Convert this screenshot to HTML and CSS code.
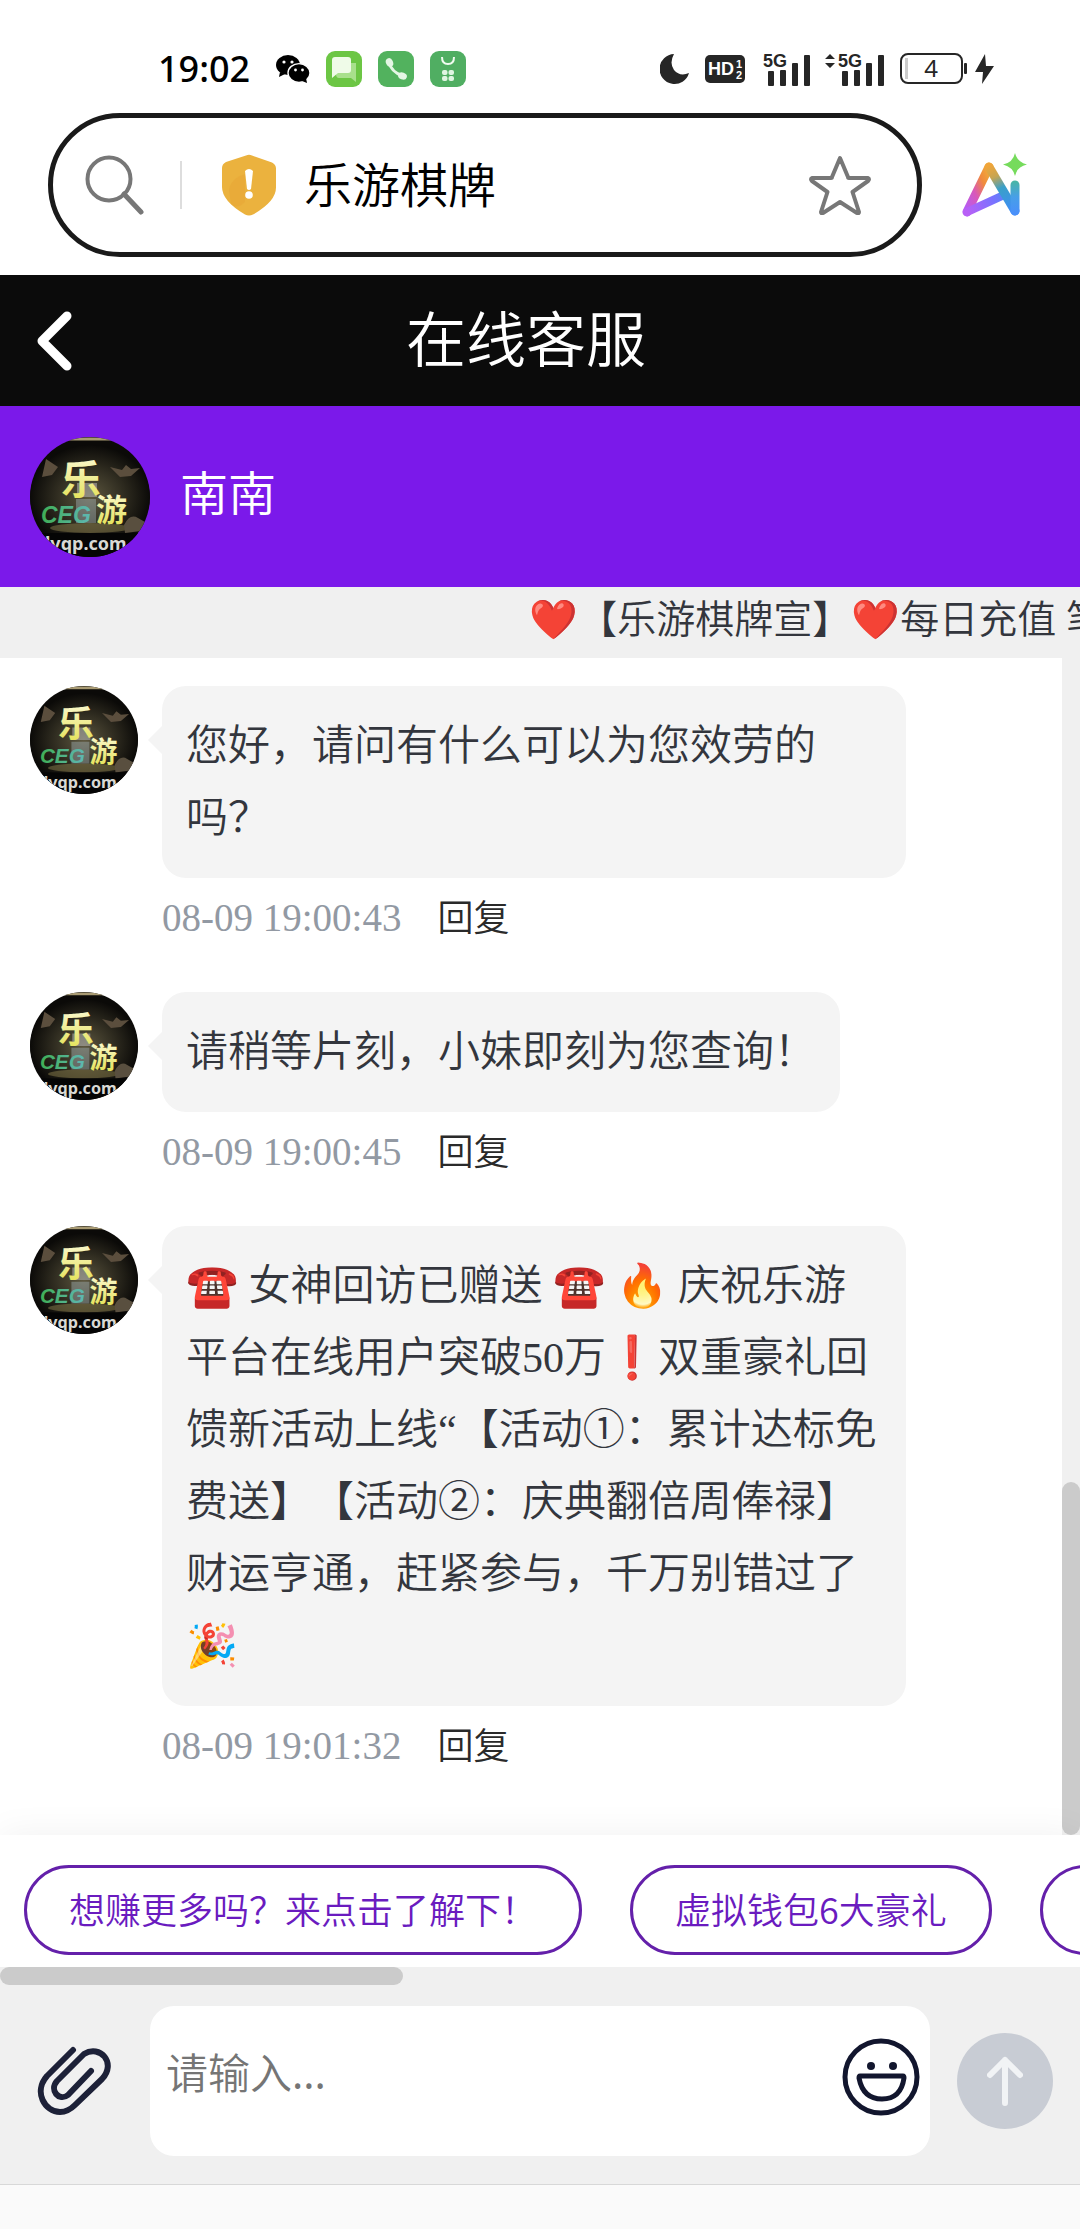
FILE: index.html
```html
<!DOCTYPE html>
<html lang="zh-CN">
<head>
<meta charset="utf-8">
<meta name="viewport" content="width=device-width, initial-scale=1">
<title>在线客服</title>
<link rel="stylesheet" href="styles.css">
</head>
<body>
<svg class="defs" aria-hidden="true">
  <defs>
    <radialGradient id="avGlow" cx=".5" cy=".5" r=".5"><stop offset="0" stop-color="#5d573f"/><stop offset=".6" stop-color="#2c291e"/><stop offset="1" stop-color="#0b0a08"/></radialGradient>
    <linearGradient id="avGold" x1="0" y1="0" x2="0" y2="1"><stop offset="0" stop-color="#fffde6"/><stop offset="1" stop-color="#e2df4a"/></linearGradient>
    <linearGradient id="avTeal" x1="0" y1="0" x2="1" y2="0"><stop offset="0" stop-color="#3fae55"/><stop offset="1" stop-color="#5fb7b4"/></linearGradient>
    <symbol id="avatar" viewBox="0 0 120 120">
      <rect width="120" height="120" fill="#0b0a08"/>
      <ellipse cx="60" cy="60" rx="60" ry="52" fill="url(#avGlow)"/>
      <path d="M34 2h52" stroke="#a89a72" stroke-width="3"/>
      <path d="M16 22l12 8-6 8-10 2zM80 30l12 3 4-5 5 4 9-1-9 8-11 1z" fill="#5b4e3d"/>
      <ellipse cx="60" cy="91" rx="40" ry="5" fill="#8a7d4c" opacity=".5"/>
      <path d="M94 88q6-12 14-7l7 4-4 9-16 2z" fill="#594f3f"/>
      <path d="M47 46h20v14h-20z" fill="#c9cdd0" opacity=".45"/>
      <text x="31" y="57" class="av-big" fill="url(#avGold)">乐</text>
      <path d="M46 62h20v24h-20z" fill="#a9bcc4" opacity=".4"/>
      <text x="11" y="86" class="av-tag" fill="url(#avTeal)">CEG</text>
      <text x="66" y="84" class="av-mid" fill="url(#avGold)">游</text>
      <rect y="96" width="120" height="24" fill="#050505"/>
      <text x="15" y="113" class="av-url" fill="#d9d9d4">lyqp.com</text>
    </symbol>
    <linearGradient id="aiA" x1="0" y1="1" x2="1" y2="0"><stop offset="0" stop-color="#b45cf5"/><stop offset=".4" stop-color="#d958b8"/><stop offset=".7" stop-color="#f08a3c"/><stop offset="1" stop-color="#f0b03a"/></linearGradient>
    <linearGradient id="aiB" gradientUnits="userSpaceOnUse" x1="5" y1="58" x2="48" y2="40"><stop offset="0" stop-color="#b860f6"/><stop offset=".6" stop-color="#7a72ff"/><stop offset="1" stop-color="#4a8cf5"/></linearGradient>
    <linearGradient id="aiC" gradientUnits="userSpaceOnUse" x1="28" y1="12" x2="50" y2="58"><stop offset="0" stop-color="#f0a53a"/><stop offset=".25" stop-color="#c6a552"/><stop offset=".5" stop-color="#3aa0c8"/><stop offset="1" stop-color="#3f8df7"/></linearGradient>
    <linearGradient id="aiD" gradientUnits="userSpaceOnUse" x1="53" y1="28" x2="54" y2="60"><stop offset="0" stop-color="#47b6a4"/><stop offset=".5" stop-color="#479fe8"/><stop offset="1" stop-color="#4a90fa"/></linearGradient>
  </defs>
</svg>

<div class="status">
  <span class="clock">19:02</span>
  <div class="notices">
    <svg width="34" height="28" viewBox="0 0 34 28"><ellipse cx="12" cy="10" rx="12" ry="10" fill="#000"/><path d="M4 17l-1 5 6-3z"/><circle cx="8" cy="7" r="1.6" fill="#fff"/><circle cx="16" cy="7" r="1.6" fill="#fff"/><ellipse cx="23" cy="18" rx="11" ry="9.4" fill="#000" stroke="#fff" stroke-width="1.4"/><path d="M26 26l5 2-1-5z"/><circle cx="19.500" cy="15" r="1.400" fill="#fff"/><circle cx="26.500" cy="15" r="1.400" fill="#fff"/></svg>
    <svg width="36" height="36" viewBox="0 0 36 36"><rect width="36" height="36" rx="9" fill="#6cc644"/><path d="M24 12h6v19l-5-4h-12q-3 0-3-4z" fill="#a8e08c"/><path d="M9 6h13q3 0 3 3v10q0 3-3 3h-10l-6 5v-18q0-3 3-3z" fill="#effbe8"/></svg>
    <svg width="36" height="36" viewBox="0 0 36 36"><rect width="36" height="36" rx="9" fill="#52b25e"/><path d="M11 11q2 10 14 14" fill="none" stroke="#e4f6e4" stroke-width="3"/><ellipse cx="11.500" cy="11.500" rx="3.500" ry="4.500" fill="#e4f6e4" transform="rotate(-25 11.500 11.500)"/><ellipse cx="24.500" cy="25" rx="4.500" ry="3.500" fill="#e4f6e4" transform="rotate(20 24.500 25)"/></svg>
    <svg width="36" height="36" viewBox="0 0 36 36"><rect width="36" height="36" rx="9" fill="#50ae62"/><path d="M12 6q0 7 6 7t6-7" fill="none" stroke="#f0fbf0" stroke-width="2"/><g fill="#dff5e2"><rect x="12" y="19" width="5.500" height="5" rx="2"/><rect x="18.500" y="19" width="5.500" height="5" rx="2"/><rect x="12" y="25" width="5.500" height="5" rx="2"/><rect x="18.500" y="25" width="5.500" height="5" rx="2"/></g></svg>
  </div>
  <div class="signals">
    <svg width="30" height="32" viewBox="0 0 30 32"><path d="M14 1A15 15 0 1 0 29 20Q20 24 14 17Q9 10 14 1z" fill="#262626"/></svg>
    <svg width="40" height="30" viewBox="0 0 40 30"><rect y="1" width="40" height="28" rx="5" fill="#262626"/><text x="3" y="21" class="hd">HD</text><text x="31" y="14" class="hd-n">1</text><text x="31" y="25" class="hd-n">2</text></svg>
    <svg width="50" height="34" viewBox="-4 0 50 34"><text x="-1" y="15" class="net">5G</text><g fill="#262626"><rect x="4" y="19" width="6" height="15" rx="1"/><rect x="16" y="18" width="6" height="16" rx="1"/><rect x="28" y="11" width="6" height="23" rx="1"/><rect x="40" y="3" width="6" height="31" rx="1"/></g></svg>
    <svg width="60" height="34" viewBox="0 0 60 34"><path d="M0 7l5-5 5 5zM0 11h10l-5 5z" fill="#262626"/><text x="13" y="15" class="net">5G</text><g fill="#262626"><rect x="17" y="19" width="6" height="15" rx="1"/><rect x="29" y="18" width="6" height="16" rx="1"/><rect x="41" y="11" width="6" height="23" rx="1"/><rect x="53" y="3" width="6" height="31" rx="1"/></g></svg>
    <svg width="94" height="32" viewBox="0 0 94 32"><rect x="1" y="1" width="61" height="29" rx="7" fill="#fff" stroke="#262626" stroke-width="2"/><rect x="5" y="5" width="3" height="21" fill="#ccc"/><text x="31" y="24" class="batt">4</text><rect x="64" y="10" width="3" height="11" rx="1" fill="#262626"/><path d="M85 1L75 19h8l-1 12 12-18h-8z" fill="#262626"/></svg>
  </div>
</div>

<div class="browser">
  <div class="address">
    <svg class="mag" width="60" height="60" viewBox="0 0 60 60" fill="none" stroke="#777" stroke-width="4" stroke-linecap="round"><circle cx="24" cy="24" r="21.500"/><path d="M39 39l17 18" stroke-width="5"/></svg>
    <span class="rule"></span>
    <svg width="54" height="62" viewBox="0 0 54 62"><path d="M24 1.500q3-1.500 6 0l20 7q4 2 4 6v19q0 14-23 27-4 2-8 0Q0 47 0 33V14q0-4 4-6z" fill="#ebb23e"/><path d="M7 36q2-12 16-16v28q-8 8-14 2z" fill="#e7a637" opacity=".6"/><path d="M23 17q4-4 8 0l-2 18q-2 2-4 0z" fill="#fff"/><circle cx="27" cy="41" r="3.800" fill="#fff"/></svg>
    <span class="site">乐游棋牌</span>
    <button class="icon-btn" aria-label="收藏"><svg width="62" height="60" viewBox="0 0 62 60"><path d="M31 3l8 19q0 1 1 1l19 0q2 1 0 3L43.500 37l6.500 20q0 2-2 1L31 47 14 58q-2 1-2-1l6.500-20L3 26q-2-2 0-3h19q1 0 1-1z" fill="none" stroke="#777" stroke-width="4" stroke-linejoin="round"/></svg></button>
  </div>
  <button class="icon-btn" aria-label="AI 助手"><svg width="66" height="64" viewBox="0 0 66 64" fill="none" stroke-width="9" stroke-linecap="round" stroke-linejoin="round"><path d="M27 14L5 59" stroke="url(#aiA)"/><path d="M5 59L42 42" stroke="url(#aiB)" stroke-width="8"/><path d="M27 14L53 58" stroke="url(#aiC)"/><path d="M53 58L53 32" stroke="url(#aiD)"/><path d="M53 0q2 9 12 11.500-10 2-12 11.500-2-9-12-11.500 10-2 12-11.500z" fill="#76db5c"/></svg></button>
</div>

<header class="title-bar">
  <button class="icon-btn back" aria-label="返回"><svg width="36" height="60" viewBox="0 0 36 60"><path d="M31 5L6 30l25 25" fill="none" stroke="#fff" stroke-width="9" stroke-linecap="round" stroke-linejoin="round"/></svg></button>
  <h1>在线客服</h1>
</header>

<section class="agent">
  <svg class="agent-avatar" role="img" aria-label="南南"><use href="#avatar"/></svg>
  <span class="agent-name">南南</span>
</section>

<div class="notice"><p>❤️【乐游棋牌宣】❤️每日充值 笔笔赠送</p></div>

<main class="chat">
  <div class="messages">
    <article class="msg">
      <svg class="avatar" aria-hidden="true"><use href="#avatar"/></svg>
      <div class="body">
        <p class="bubble">您好，请问有什么可以为您效劳的吗？</p>
        <div class="meta"><time>08-09 19:00:43</time><button class="reply">回复</button></div>
      </div>
    </article>
    <article class="msg">
      <svg class="avatar" aria-hidden="true"><use href="#avatar"/></svg>
      <div class="body">
        <p class="bubble">请稍等片刻，小妹即刻为您查询！</p>
        <div class="meta"><time>08-09 19:00:45</time><button class="reply">回复</button></div>
      </div>
    </article>
    <article class="msg">
      <svg class="avatar" aria-hidden="true"><use href="#avatar"/></svg>
      <div class="body">
        <p class="bubble">☎️ 女神回访已赠送 ☎️ 🔥 庆祝乐游平台在线用户突破50万❗双重豪礼回馈新活动上线“【活动①：累计达标免费送】【活动②：庆典翻倍周俸禄】财运亨通，赶紧参与，千万别错过了🎉</p>
        <div class="meta"><time>08-09 19:01:32</time><button class="reply">回复</button></div>
      </div>
    </article>
  </div>
  <div class="v-rail"><div class="v-thumb"></div></div>
</main>

<nav class="quick" aria-label="快捷问题">
  <button class="chip">想赚更多吗？来点击了解下！</button>
  <button class="chip">虚拟钱包6大豪礼</button>
  <button class="chip chip-next" aria-label="更多活动"></button>
</nav>
<div class="h-rail"><div class="h-thumb" style="width: 37.3%"></div></div>

<form class="composer">
  <button type="button" class="icon-btn clip" aria-label="附件"><svg width="76" height="70" viewBox="0 0 76 70" fill="none" stroke="#1d2138" stroke-width="6" stroke-linecap="round" stroke-linejoin="round"><path d="M36 4L10 30C-4 46 8 66 23 66C30 66 34 63 38 59L65 33C80 17 63-2 47 8L20 35C12 44 22 56 31 49L54 25"/></svg></button>
  <div class="field">
    <input id="msg" type="text" placeholder="请输入..." aria-label="请输入">
    <button type="button" class="icon-btn" aria-label="表情"><svg width="78" height="78" viewBox="0 0 78 78" fill="none" stroke="#12162e" stroke-width="5"><circle cx="39" cy="39" r="36"/><circle cx="29" cy="28" r="4" fill="#12162e" stroke="none"/><circle cx="51" cy="28" r="4" fill="#12162e" stroke="none"/><path d="M18 38h43q1 0 1 2Q59 61 40 61T17 40q0-2 1-2z" stroke-linejoin="round"/></svg></button>
  </div>
  <button type="submit" class="send" aria-label="发送"><svg width="36" height="50" viewBox="0 0 36 50" fill="none" stroke="#f1f3f5" stroke-width="6" stroke-linecap="round" stroke-linejoin="round"><path d="M18 47V4M3 19L18 4l15 15"/></svg></button>
</form>
<footer class="home-bar"></footer>
</body>
</html>
```
FILE: styles.css
```css
* { box-sizing: border-box; }

body {
  margin: 0;
  min-height: 100vh;
  display: flex;
  flex-direction: column;
  background: #fff;
  color: #33363d;
  font-family: "Noto Sans", "Noto Sans CJK SC DemiLight", "Noto Sans CJK SC", sans-serif;
  text-spacing-trim: space-all;
  overflow-x: hidden;
}

h1, p { margin: 0; font-weight: inherit; }
svg { display: block; flex: none; }
.defs { position: absolute; width: 0; height: 0; }

button {
  font: inherit;
  color: inherit;
  background: none;
  border: 0;
  padding: 0;
  flex: none;
}

/* device status bar */
.status {
  height: 113px;
  padding: 25px 86px 0 158px;
  display: flex;
  align-items: center;
}
.clock { font: 500 36px/44px "Noto Sans", sans-serif; color: #000; }
.notices { display: flex; align-items: center; gap: 16px; margin-left: 26px; }
.signals { display: flex; align-items: center; gap: 15px; margin-left: auto; }
.hd { font: 700 18px "Liberation Sans", sans-serif; fill: #fff; }
.hd-n { font: 700 11px "Liberation Sans", sans-serif; fill: #fff; }
.net { font: 700 18px "Liberation Sans", sans-serif; fill: #262626; }
.batt { font: 400 24px "Noto Sans", sans-serif; fill: #262626; text-anchor: middle; }

/* address bar */
.browser {
  display: flex;
  align-items: center;
  gap: 40px;
  padding: 0 52px 18px 48px;
}
.address {
  flex: 1;
  display: flex;
  align-items: center;
  height: 144px;
  padding: 0 46px 0 32px;
  border: 5px solid #1a1a1a;
  border-radius: 72px;
}
.rule { width: 2px; height: 48px; margin: 0 40px 0 35px; background: #ddd; }
.site { flex: 1; margin-left: 28px; font-size: 48px; line-height: 64px; color: #000; }

/* page title */
.title-bar {
  display: flex;
  align-items: center;
  height: 131px;
  padding: 0 100px 4px 0;
  background: #0b0b0b;
  color: #fff;
}
.back { width: 72px; padding: 4px 0 0 36px; }
.title-bar h1 { flex: 1; text-align: center; font-size: 60px; line-height: 84px; }

.agent {
  display: flex;
  align-items: center;
  gap: 30px;
  height: 181px;
  padding: 0 30px;
  background: #7b19ea;
  color: #fff;
}
.agent-avatar { width: 120px; height: 120px; border-radius: 50%; }
.agent-name { padding-bottom: 8px; font-size: 48px; line-height: 64px; }

.av-big { font: 700 40px "Noto Sans CJK SC", sans-serif; }
.av-mid { font: 700 31px "Noto Sans CJK SC", sans-serif; }
.av-tag { font: italic 700 23px "Liberation Sans", sans-serif; }
.av-url { font: 700 18px "Noto Sans", sans-serif; }

/* scrolling announcement */
.notice { height: 71px; background: #f0f0f0; overflow: hidden; }
.notice p {
  padding-left: 49%;
  font-size: 39px;
  line-height: 66px;
  white-space: nowrap;
  font-family: "Liberation Serif", "Noto Sans CJK SC DemiLight", "Noto Sans CJK SC", serif;
}

/* conversation */
.chat { flex: 1; display: flex; }
.messages { flex: 1; padding: 28px 0 12px 30px; }
.msg { display: flex; gap: 24px; }
.msg + .msg { margin-top: 34px; }
.avatar { width: 108px; height: 108px; border-radius: 50%; }
.body { flex: 0 1 744px; display: flex; flex-direction: column; align-items: flex-start; }
.bubble {
  position: relative;
  padding: 24px;
  border-radius: 24px;
  background: #f4f4f4;
  font: 400 42px/72px "Liberation Serif", "Noto Sans CJK SC DemiLight", "Noto Sans CJK SC", serif;
}
.bubble::before {
  content: "";
  position: absolute;
  top: 40px;
  left: -14px;
  border: solid transparent;
  border-width: 14px 14px 14px 0;
  border-right-color: #f4f4f4;
}
.meta { display: flex; align-items: center; gap: 36px; height: 80px; }
.meta time { font: 400 39px/48px "Liberation Serif", serif; color: #9299a3; }
.reply { font-size: 36px; line-height: 48px; color: #2a2a2a; }

.v-rail { width: 18px; display: flex; align-items: flex-end; background: #f0f0f0; }
.v-thumb { width: 100%; height: 30%; border-radius: 9px; background: #cbcbcb; }

/* quick replies */
.quick {
  display: flex;
  gap: 48px;
  padding: 30px 24px 12px;
  background: #fff;
  box-shadow: 0 0 36px rgba(0, 0, 0, .06);
  overflow: hidden;
}
.chip {
  height: 90px;
  padding: 0 42px 4px;
  border: 3px solid #6420aa;
  border-radius: 45px;
  color: #6a1bbf;
  font: 400 36px/48px "Noto Sans CJK SC DemiLight", "Noto Sans CJK SC", sans-serif;
  white-space: nowrap;
}
.chip-next { width: 360px; }
.h-rail { height: 18px; background: #f0f0f0; position: relative; }
.h-thumb { height: 100%; border-radius: 9px; background: #cbcbcb; }

/* message composer */
.composer {
  position: relative;
  display: flex;
  align-items: center;
  padding: 21px 27px 28px 37px;
  background: #f0f0f0;
  border-bottom: 1px solid #d8d8d8;
}
.field {
  flex: 1;
  display: flex;
  align-items: center;
  height: 150px;
  margin: 0 27px 0 37px;
  padding: 0 10px 8px 16px;
  border-radius: 24px;
  background: #fff;
}
.field input {
  flex: 1;
  min-width: 0;
  padding: 0 0 8px;
  border: 0;
  outline: 0;
  background: none;
  color: #33363d;
  font: 400 42px/60px "Noto Sans", "Noto Sans CJK SC DemiLight", "Noto Sans CJK SC", sans-serif;
}
.field input::placeholder { color: #757575; opacity: 1; }
.send {
  width: 96px;
  height: 96px;
  display: grid;
  place-items: center;
  border-radius: 50%;
  background: #c8ccd4;
}
.home-bar { height: 44px; background: #fafafa; }
```
